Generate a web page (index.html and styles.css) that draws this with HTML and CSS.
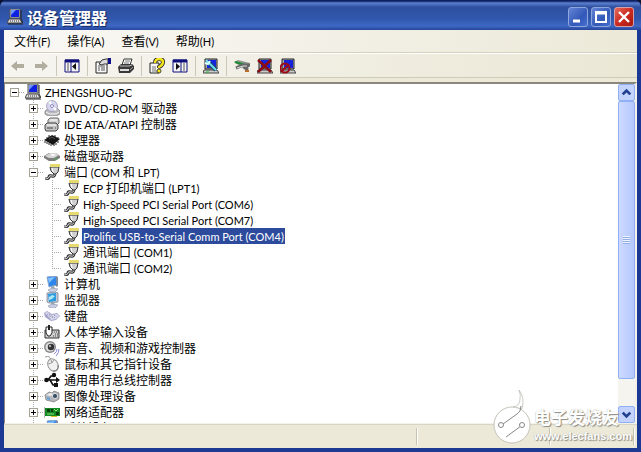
FILE: index.html
```html
<!DOCTYPE html>
<html lang="zh-CN">
<head>
  <meta charset="UTF-8" />
  <meta name="viewport" content="width=device-width, initial-scale=1.0"/>
  <title>设备管理器</title>
  <link rel="stylesheet" href="styles.css">
</head>
<body>
  <svg class="sprite" aria-hidden="true">
    <symbol id="i-pc" viewBox="0 0 16 16">
      <path d="M3 0h10v9H3z" fill="#c8c8c8" stroke="#555" />
      <path d="M4 1h8v7H4z" fill="#1020e0" />
      <path d="M4 1h5L4 6z" fill="#6d98ff" />
      <path d="M2 10h11l2 4H0z" fill="#dedede" stroke="#444" />
      <path d="M3 12h9" stroke="#333" stroke-dasharray="1 1" />
      <path d="M14 1v9l2 4" stroke="#222" fill="none" />
      <path d="M1 15h15" stroke="#222" />
    </symbol>
    <symbol id="i-disc" viewBox="0 0 16 16">
      <path d="M1 11l4-3h8l3 3v3l-4 2H4l-3-2z" fill="#b9b9be" stroke="#77777c" stroke-width=".7" />
      <path d="M2 12l4 2h6l3-2" stroke="#f4f4f4" fill="none" />
      <circle cx="8" cy="6" r="5.5" fill="#d5d5f0" stroke="#9090a8" stroke-width=".7" />
      <path d="M8 6L4 2l3-1zM8 6l5 3-2 2z" fill="#fff" />
      <circle cx="8" cy="6" r="1.5" fill="#fff" stroke="#7774b0" stroke-width=".8" />
    </symbol>
    <symbol id="i-ide" viewBox="0 0 16 16">
      <path d="M4 4l2-2h8l1 2v3l-2 2H4z" fill="#d0d0d0" stroke="#666" />
      <path d="M1 9l2-2h9l2 2v4l-2 2H2l-1-2z" fill="#c4c4c4" stroke="#444" />
      <path d="M3 9h9M6 4h7" stroke="#fff" />
      <path d="M3 12h6M11 12h1" stroke="#444" />
    </symbol>
    <symbol id="i-cpu" viewBox="0 0 16 16">
      <path d="M0 8l8-5 8 4-7 6z" fill="#151515" />
      <path d="M1 9v2M3 10v2M5 11v2M7 12v2M10 12v2M12 11v2M14 9v2M3 5v1M5 3v2M11 3v2M14 5v1" stroke="#222" />
      <path d="M5 7l3-2 3 2" stroke="#555" fill="none" />
    </symbol>
    <symbol id="i-disk" viewBox="0 0 16 16">
      <path d="M0 8l5-3h7l4 3v2l-5 3H5l-5-3z" fill="#7d7d7d" />
      <path d="M1 8l5-3h6l3 2-5 3H5z" fill="#d4d4d4" />
      <path d="M6 7l3-1 3 1-3 1z" fill="#fff" />
      <path d="M11 11h2" stroke="#3b3" />
    </symbol>
    <symbol id="i-port" viewBox="0 0 16 16">
      <path d="M11 9q0 4-3 3t-3 1-4 2" stroke="#333" stroke-width="3" fill="none" />
      <path d="M11 9q0 4-3 3t-3 1-4 2" stroke="#ddd" stroke-width="1" fill="none" />
      <path d="M6 3h9l-1 5-2 2h-2L7 7z" fill="#d0d0d0" stroke="#333" />
      <path d="M8 4l1 4" stroke="#fff" />
      <path d="M6 0h10v3H6z" fill="#f3eea8" />
      <path d="M7 0v3M9 0v3M11 0v3M13 0v3M15 0v3" stroke="#d8c83a" />
    </symbol>
    <symbol id="i-computer" viewBox="0 0 16 16">
      <path d="M3 1l9-1 1 9-8 2z" fill="#2f86ea" stroke="#8aa6cc" />
      <path d="M4 2l7-1-6 6z" fill="#84c3ff" />
      <path d="M12 0l2 1v9l-2 1z" fill="#7b8ba4" />
      <path d="M7 11l3-1 1 3H7z" fill="#9aa" />
      <path d="M4 14l4-2 6 1-3 3H6z" fill="#c9cfe2" stroke="#8b91ad" stroke-width=".6" />
    </symbol>
    <symbol id="i-monitor" viewBox="0 0 16 16">
      <path d="M3 1l9-1 2 1v9l-9 1-2-1z" fill="#c3c8d6" stroke="#7b8396" stroke-width=".8" />
      <path d="M4 2l8-1v8l-7 1z" fill="#2b9be0" />
      <path d="M5 5l3-2 3 1-3 3-3 1z" fill="#aee6f4" />
      <path d="M7 11l3-1 1 3H7z" fill="#9aa" />
      <path d="M4 14l4-2 6 1-3 3H6z" fill="#c9cfe2" stroke="#8b91ad" stroke-width=".6" />
    </symbol>
    <symbol id="i-keyboard" viewBox="0 0 16 16">
      <path d="M0 5l3-2 5 3 5-1 3 3-4 4-5 1-6-4z" fill="#a5a5cb" />
      <path d="M1 5l2-1 5 3 5-1 2 2-3 3-5 1z" fill="#dcdcef" />
      <path d="M3 6l6 4M5 6l6 4M10 7l3 2M2 7l5 4" stroke="#8888b0" stroke-dasharray="1 1" />
    </symbol>
    <symbol id="i-hid" viewBox="0 0 16 16">
      <path d="M1 6h14v8H1z" fill="#d2d2d2" stroke="#333" />
      <path d="M10 8h5M11 10h4M9 12h6" stroke="#444" stroke-dasharray="1 1" />
      <path d="M2 3h6v6l-2 3H4L2 9z" fill="#fff" stroke="#222" />
      <path d="M5 1v5" stroke="#222" stroke-width="2" />
    </symbol>
    <symbol id="i-sound" viewBox="0 0 16 16">
      <circle cx="6" cy="7" r="6" fill="#8a8a8e" />
      <circle cx="6" cy="7" r="4.5" fill="#ddd" />
      <circle cx="7" cy="7" r="3.2" fill="#333" />
      <circle cx="6" cy="6" r="1.2" fill="#aaa" />
      <path d="M10 14q3-2 3-5M12 16q3-3 3-7" stroke="#8a8ae0" fill="none" />
    </symbol>
    <symbol id="i-mouse" viewBox="0 0 16 16">
      <path d="M1 1q5-2 6 3" stroke="#999" fill="none" />
      <ellipse cx="9" cy="9" rx="5" ry="6.5" transform="rotate(-28 9 9)" fill="#f1f1f1" stroke="#999" />
      <path d="M4 8q4 0 6-4M7 4l1 3" stroke="#999" fill="none" />
      <path d="M9 15q6 0 5-6" stroke="#777" fill="none" />
    </symbol>
    <symbol id="i-usb" viewBox="0 0 16 16">
      <path d="M2 8h12M4 8l3-4h3M6 8l3 5h2" stroke="#111" stroke-width="1.6" fill="none" />
      <circle cx="2.5" cy="8" r="2.3" fill="#111" />
      <path d="M12 5l4 3-4 3zM10 11h4v4h-4z" fill="#111" />
      <circle cx="10" cy="3" r="2.2" fill="#111" />
    </symbol>
    <symbol id="i-camera" viewBox="0 0 16 16">
      <path d="M1 7l4-3 3 1 2-2 5 2v6l-5 3-8-2z" fill="#b4b6bb" stroke="#777" stroke-width=".7" />
      <path d="M2 7l4-2 4 1-3 2z" fill="#eee" />
      <circle cx="11" cy="8" r="2.6" fill="#3a5068" stroke="#ddd" />
      <path d="M3 9l3 1v2l-3-1z" fill="#5ba0dd" />
    </symbol>
    <symbol id="i-net" viewBox="0 0 16 16">
      <path d="M1 4h15v8H1z" fill="#148a24" />
      <path d="M0 3v11" stroke="#777" />
      <path d="M3 5h3v3H3zM7 5h2v3H7zM12 8h3v3h-3z" fill="#083d10" />
      <path d="M10 5l2 2 2-2M3 10h7" stroke="#8fdf70" fill="none" />
      <path d="M7 12h6v1H7z" fill="#e0c024" />
    </symbol>
    <symbol id="i-tools" viewBox="0 0 16 16">
      <path d="M2 1h12v10H2z" fill="#aaa" stroke="#222" />
      <path d="M4 2h9v8H4z" fill="#1424dc" />
      <path d="M1 12h13l2 3H0z" fill="#ccc" stroke="#444" />
    </symbol>
  </svg>

  <div class="window">
    <header class="titlebar">
      <svg class="icon"><use href="#i-pc" /></svg>
      <h1>设备管理器</h1>
      <div class="controls">
        <button type="button" aria-label="最小化"><svg viewBox="0 0 18 18"><path d="M4 13h7" stroke="#fff" stroke-width="3" /></svg></button>
        <button type="button" aria-label="最大化"><svg viewBox="0 0 18 18"><path d="M4 4h10v10H4z" stroke="#fff" stroke-width="2" fill="none" /><path d="M3 5h12" stroke="#fff" stroke-width="3" /></svg></button>
        <button type="button" class="close" aria-label="关闭"><svg viewBox="0 0 18 18"><path d="M4 4l10 10M14 4L4 14" stroke="#fff" stroke-width="2.4" /></svg></button>
      </div>
    </header>

    <nav class="menubar">
      <button type="button">文件<span class="en">(F)</span></button>
      <button type="button">操作<span class="en">(A)</span></button>
      <button type="button">查看<span class="en">(V)</span></button>
      <button type="button">帮助<span class="en">(H)</span></button>
    </nav>

    <div class="toolbar">
      <div class="group">
        <button type="button" aria-label="后退"><svg viewBox="0 0 16 16"><path d="M1 8l6-5v3h7v4H7v3z" fill="#b1ae9f" /></svg></button>
        <button type="button" aria-label="前进"><svg viewBox="0 0 16 16"><path d="M15 8L9 3v3H2v4h7v3z" fill="#b1ae9f" /></svg></button>
      </div>
      <div class="group">
        <button type="button" aria-label="显示控制台树">
          <svg viewBox="0 0 16 16"><path d="M1 2h14v12H1z" fill="#f4f4f4" stroke="#10107c" /><path d="M1 3h14" stroke="#10107c" stroke-width="3" /><path d="M7 4v10" stroke="#10107c" /><path d="M3 6h2M3 8h2M3 10h2M3 12h2" stroke="#555" /><path d="M12 5v7L8 8.5z" fill="#111" /></svg>
        </button>
      </div>
      <div class="group">
        <button type="button" aria-label="属性">
          <svg viewBox="0 0 16 16"><path d="M1 4h11v11H1z" fill="#f8f8f8" stroke="#222" /><path d="M3 8h7M3 10h2M6 10h4M3 12h2M6 12h4" stroke="#555" /><path d="M4 6l3-4 4-1h2v5H9L7 7z" fill="#ddd" stroke="#333" /><path d="M13 0h3v6h-3z" fill="#10108c" /></svg>
        </button>
        <button type="button" aria-label="打印">
          <svg viewBox="0 0 16 16"><path d="M4 7l2-6h8l-2 6z" fill="#fff" stroke="#333" /><path d="M7 3h5M6 5h5" stroke="#777" /><path d="M0 9l3-3h11l2 2v3l-4 4H1z" fill="#3a3a3a" /><path d="M2 8h9l3-1" stroke="#bbb" fill="none" /><path d="M2 11h9v2H2z" fill="#ddd" /><path d="M12 12l3-3" stroke="#999" /></svg>
        </button>
      </div>
      <div class="group">
        <button type="button" aria-label="帮助">
          <svg viewBox="0 0 16 16"><path d="M1 5h9v10H1z" fill="#f6f6f6" stroke="#222" /><path d="M3 9h4M3 11h4M3 13h5" stroke="#777" /><path d="M6 5q0-4 4-4t4 3-4 5v1" stroke="#222" stroke-width="4" fill="none" /><path d="M6 5q0-4 4-4t4 3-4 5v1" stroke="#f4e51c" stroke-width="2.4" fill="none" /><circle cx="10" cy="13" r="2" fill="#f4e51c" stroke="#222" stroke-width=".8" /></svg>
        </button>
        <button type="button" aria-label="显示操作窗格">
          <svg viewBox="0 0 16 16"><path d="M1 2h14v12H1z" fill="#f4f4f4" stroke="#10107c" /><path d="M1 3h14" stroke="#10107c" stroke-width="3" /><path d="M9 4v10" stroke="#10107c" /><path d="M11 6h2M11 8h2M11 10h2M11 12h2" stroke="#555" /><path d="M4 5v7l4-3.5z" fill="#111" /></svg>
        </button>
      </div>
      <div class="group">
        <button type="button" aria-label="扫描检测硬件改动">
          <svg viewBox="0 0 16 16"><use href="#i-tools" /><path d="M5 4l8 8" stroke="#174a70" stroke-width="4" /><path d="M3 2l2 2 8 8" stroke="#70dff0" stroke-width="2" fill="none" /><path d="M2 5l3 1 2-3" stroke="#d8ffff" stroke-width="2" fill="none" /><path d="M3 14h3" stroke="#1c3" /></svg>
        </button>
      </div>
      <div class="group">
        <button type="button" aria-label="更新驱动程序">
          <svg viewBox="0 0 16 16"><path d="M0 4l4-2 12 3-2 4-5 1z" fill="#8f9890" /><path d="M1 4l10 3" stroke="#1b8a32" stroke-width="2" /><path d="M2 10l7-3 6 0-4 3 3 2" stroke="#666" stroke-width="3" fill="none" /><path d="M3 10l6-2h4" stroke="#ddd" fill="none" /><path d="M11 13h4" stroke="#bd6a28" stroke-width="2" /></svg>
        </button>
        <button type="button" aria-label="卸载">
          <svg viewBox="0 0 16 16"><use href="#i-tools" /><path d="M1 2l13 12M14 2L1 14" stroke="#8c0c14" stroke-width="2.6" /></svg>
        </button>
        <button type="button" aria-label="停用">
          <svg viewBox="0 0 16 16"><use href="#i-tools" /><circle cx="5" cy="10" r="4.5" fill="none" stroke="#9c0c18" stroke-width="2" /><path d="M2 13l6-6" stroke="#9c0c18" stroke-width="2" /></svg>
        </button>
      </div>
    </div>

    <main class="pane">
      <div class="tree">
        <ul>
          <li>
            <div class="row"><button type="button" class="toggle open" aria-label="折叠"></button><svg class="icon"><use href="#i-pc" /></svg><span class="label"><span class="en">ZHENGSHUO-PC</span></span></div>
            <ul class="classes">
              <li><div class="row"><button type="button" class="toggle" aria-label="展开"></button><svg class="icon"><use href="#i-disc" /></svg><span class="label"><span class="en">DVD/CD-ROM </span>驱动器</span></div></li>
              <li><div class="row"><button type="button" class="toggle" aria-label="展开"></button><svg class="icon"><use href="#i-ide" /></svg><span class="label"><span class="en">IDE ATA/ATAPI </span>控制器</span></div></li>
              <li><div class="row"><button type="button" class="toggle" aria-label="展开"></button><svg class="icon"><use href="#i-cpu" /></svg><span class="label">处理器</span></div></li>
              <li><div class="row"><button type="button" class="toggle" aria-label="展开"></button><svg class="icon"><use href="#i-disk" /></svg><span class="label">磁盘驱动器</span></div></li>
              <li>
                <div class="row"><button type="button" class="toggle open" aria-label="折叠"></button><svg class="icon"><use href="#i-port" /></svg><span class="label">端口<span class="en"> (COM </span>和<span class="en"> LPT)</span></span></div>
                <ul class="devices">
                  <li><div class="row"><svg class="icon"><use href="#i-port" /></svg><span class="label"><span class="en">ECP </span>打印机端口<span class="en"> (LPT1)</span></span></div></li>
                  <li><div class="row"><svg class="icon"><use href="#i-port" /></svg><span class="label"><span class="en">High-Speed PCI Serial Port (COM6)</span></span></div></li>
                  <li><div class="row"><svg class="icon"><use href="#i-port" /></svg><span class="label"><span class="en">High-Speed PCI Serial Port (COM7)</span></span></div></li>
                  <li><div class="row"><svg class="icon"><use href="#i-port" /></svg><span class="label selected"><span class="en">Prolific USB-to-Serial Comm Port (COM4)</span></span></div></li>
                  <li><div class="row"><svg class="icon"><use href="#i-port" /></svg><span class="label">通讯端口<span class="en"> (COM1)</span></span></div></li>
                  <li><div class="row"><svg class="icon"><use href="#i-port" /></svg><span class="label">通讯端口<span class="en"> (COM2)</span></span></div></li>
                </ul>
              </li>
              <li><div class="row"><button type="button" class="toggle" aria-label="展开"></button><svg class="icon"><use href="#i-computer" /></svg><span class="label">计算机</span></div></li>
              <li><div class="row"><button type="button" class="toggle" aria-label="展开"></button><svg class="icon"><use href="#i-monitor" /></svg><span class="label">监视器</span></div></li>
              <li><div class="row"><button type="button" class="toggle" aria-label="展开"></button><svg class="icon"><use href="#i-keyboard" /></svg><span class="label">键盘</span></div></li>
              <li><div class="row"><button type="button" class="toggle" aria-label="展开"></button><svg class="icon"><use href="#i-hid" /></svg><span class="label">人体学输入设备</span></div></li>
              <li><div class="row"><button type="button" class="toggle" aria-label="展开"></button><svg class="icon"><use href="#i-sound" /></svg><span class="label">声音、视频和游戏控制器</span></div></li>
              <li><div class="row"><button type="button" class="toggle" aria-label="展开"></button><svg class="icon"><use href="#i-mouse" /></svg><span class="label">鼠标和其它指针设备</span></div></li>
              <li><div class="row"><button type="button" class="toggle" aria-label="展开"></button><svg class="icon"><use href="#i-usb" /></svg><span class="label">通用串行总线控制器</span></div></li>
              <li><div class="row"><button type="button" class="toggle" aria-label="展开"></button><svg class="icon"><use href="#i-camera" /></svg><span class="label">图像处理设备</span></div></li>
              <li><div class="row"><button type="button" class="toggle" aria-label="展开"></button><svg class="icon"><use href="#i-net" /></svg><span class="label">网络适配器</span></div></li>
              <li><div class="row"><button type="button" class="toggle" aria-label="展开"></button><svg class="icon"><use href="#i-computer" /></svg><span class="label">系统设备</span></div></li>
            </ul>
          </li>
        </ul>
      </div>
      <div class="scrollbar">
        <button type="button" aria-label="向上滚动"><svg viewBox="0 0 16 16"><path d="M4 10l4-4 4 4" /></svg></button>
        <div class="track"><div class="thumb"></div></div>
        <button type="button" aria-label="向下滚动"><svg viewBox="0 0 16 16"><path d="M4 6l4 4 4-4" /></svg></button>
      </div>
    </main>

    <footer class="statusbar"><span></span><span></span><span></span></footer>

    <div class="watermark">
      <svg viewBox="0 0 38 56">
        <path d="M20 19q7-1 7-8 1-4-1-9 6 7 3 19z" fill="#fff" stroke="#b5b5ad" stroke-width=".7" />
        <circle cx="19" cy="37" r="18" fill="#fff" stroke="#c4c2b8" />
        <path d="M10 36l14-10q4-2 4-8M28 38L13 49" stroke="#888" fill="none" />
        <circle cx="8" cy="37" r="2.5" fill="#fff" stroke="#888" />
        <circle cx="29" cy="37" r="2.5" fill="#fff" stroke="#888" />
      </svg>
      <div>
        <strong>电子发烧友</strong>
        <span>www.elecfans.com</span>
      </div>
    </div>
  </div>
</body>
</html>
```
FILE: styles.css
```css
* {
  box-sizing: border-box;
  margin: 0;
  padding: 0;
}

body {
  font-family: "Noto Sans CJK SC", sans-serif;
  font-size: 12px;
  line-height: 16px;
  color: #000;
  background: #0c1230;
}

button {
  border: none;
  background: none;
  font: inherit;
  color: inherit;
}

ul {
  list-style: none;
}

.en {
  font-family: Lato, sans-serif;
  font-size: 11px;
  line-height: 1;
}

.sprite {
  display: none;
}

.icon {
  width: 16px;
  height: 16px;
  flex: none;
}

.window {
  position: relative;
  display: flex;
  flex-direction: column;
  height: 100vh;
  padding: 0 4px 4px;
  background: #1c3a94;
  border-radius: 7px 7px 0 0;
  overflow: hidden;
}

/* title bar */
.titlebar {
  display: flex;
  align-items: center;
  height: 30px;
  margin: 0 -4px;
  padding: 3px 7px 0 7px;
  gap: 4px;
  flex: none;
  background: linear-gradient(#0d1f60 0, #0d1f60 1px, #5c80d0 3px, #2f509f 7px, #3056ac 18px, #3d68c4 26px, #26469b 30px);
}

.titlebar h1 {
  flex: 1;
  font-size: 16px;
  line-height: 22px;
  font-weight: bold;
  color: #fff;
  text-shadow: 1px 1px 1px #10235c;
}

.controls {
  display: flex;
  gap: 3px;
}

.controls button {
  width: 20px;
  height: 20px;
  border: 1px solid #8ea6de;
  border-radius: 3px;
  background: linear-gradient(135deg, #6484d4, #3258b8 60%, #4670d0);
}

.controls .close {
  background: linear-gradient(135deg, #e46c5c, #cc2a20 50%, #a8180f);
  border-color: #d8a0a8;
}

.controls svg {
  display: block;
  width: 18px;
  height: 18px;
}

/* menu and toolbar */
.menubar {
  display: flex;
  align-items: center;
  gap: 17px;
  height: 23px;
  padding: 0 10px;
  flex: none;
  background: linear-gradient(90deg, #f9f8f5, #ece9d8);
  border-bottom: 1px solid #d4d0c0;
}

.toolbar {
  display: flex;
  align-items: center;
  height: 29px;
  padding: 0 6px 4px;
  flex: none;
  background: linear-gradient(transparent 23px, #cfcbb9 23px, #cfcbb9 24px, #ece9d8 24px), linear-gradient(90deg, #f6f5f0, #ebe7d5);
  border-top: 1px solid #fff;
}

.group {
  display: flex;
  gap: 7px;
  padding-right: 7px;
  height: 20px;
  align-items: center;
}

.group + .group {
  border-left: 1px solid #cbc8b8;
  padding-left: 7px;
}

.toolbar svg {
  display: block;
  width: 16px;
  height: 16px;
}

/* device tree */
.pane {
  display: flex;
  flex: 1;
  min-height: 0;
  background: #fff;
  border: 1px solid #8a887c;
  border-top: 2px solid #8a887c;
  border-bottom-color: #f4f2e8;
  border-right: 2px solid #f4f2e8;
}

.tree {
  flex: 1;
  padding-left: 5px;
  overflow: hidden;
}

.row {
  display: flex;
  align-items: center;
  height: 16px;
}

.row .icon {
  margin-left: 6px;
}

.toggle {
  width: 9px;
  height: 9px;
  flex: none;
  border: 1px solid #a5a294;
  background:
    linear-gradient(#000, #000) center / 5px 1px no-repeat,
    linear-gradient(#000, #000) center / 1px 5px no-repeat,
    #fff;
}

.toggle.open {
  background: linear-gradient(#000, #000) center / 5px 1px no-repeat, #fff;
}

.label {
  margin-left: 3px;
  padding: 0 1px;
  white-space: pre;
}

.selected {
  color: #fff;
  background: #2c4b9c;
}

li > .row {
  background: repeating-linear-gradient(90deg, #aaa 0 1px, #fff 1px 2px) 9px 8px / 6px 1px no-repeat;
}

.classes {
  padding-left: 19px;
  background: repeating-linear-gradient(#aaa 0 1px, #fff 1px 2px) 23px 0 / 1px 100% no-repeat;
}

.devices {
  padding-left: 19px;
  background: repeating-linear-gradient(#aaa 0 1px, #fff 1px 2px) 23px 0 / 1px calc(100% - 8px) no-repeat;
}

.devices > li > .row {
  padding-left: 9px;
  background-position: 4px 8px;
  background-size: 10px 1px;
}

/* scroll bar */
.scrollbar {
  display: flex;
  flex-direction: column;
  width: 17px;
  flex: none;
  background: #f5f4ee;
}

.scrollbar button {
  height: 17px;
  border: 1px solid #8fb0f4;
  border-radius: 2px;
  background: #c3d3fd;
}

.scrollbar svg {
  display: block;
  width: 15px;
  height: 15px;
  fill: none;
  stroke: #23418f;
  stroke-width: 3px;
}

.track {
  display: flex;
  flex: 1;
}

.thumb {
  width: 17px;
  height: 91%;
  border: 1px solid #8fb0f4;
  border-radius: 2px;
  background:
    repeating-linear-gradient(#eef3ff 0 1px, #92aee6 1px 2px) center / 7px 8px no-repeat,
    linear-gradient(90deg, #cdd9ff, #b5c8fc);
}

/* status bar */
.statusbar {
  display: flex;
  height: 24px;
  padding: 3px 3px 3px 0;
  flex: none;
  background: #ece9d8;
  border-top: 1px solid #d8d5c6;
}

.statusbar span {
  width: 84px;
  border-right: 1px solid #c5c2b0;
  box-shadow: 1px 0 #fff;
}

.statusbar span:nth-child(1) {
  flex: 1;
}

.statusbar span:nth-child(2) {
  width: 133px;
}

/* site mark over the lower right corner */
.watermark {
  position: absolute;
  right: 9px;
  bottom: 8px;
  display: flex;
  align-items: flex-end;
  gap: 3px;
  color: #fff;
  text-shadow: 1px 1px 1px #8c8c84, 0 0 1px #a5a59c;
}

.watermark svg {
  width: 38px;
  height: 56px;
}

.watermark strong,
.watermark span {
  display: block;
}

.watermark strong {
  font-size: 17px;
  line-height: 22px;
}

.watermark span {
  font-family: "Liberation Sans", sans-serif;
  font-size: 11px;
  font-weight: bold;
}
```
